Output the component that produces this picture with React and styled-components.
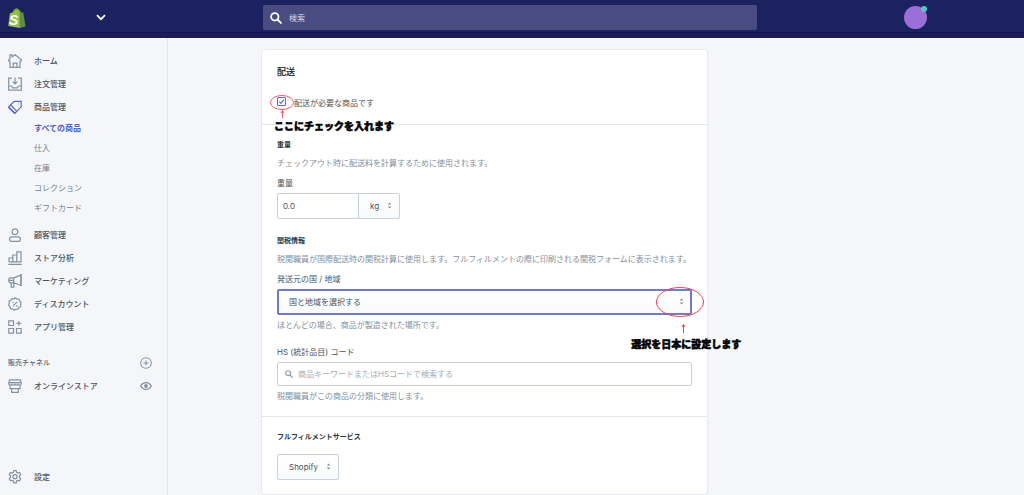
import React from 'react'
import styled, { createGlobalStyle, css } from 'styled-components'

const GlobalStyle = createGlobalStyle`
    * {
        box-sizing: border-box;
    }

    body {
        margin: 0;
        background: #f4f6fa;
        color: #4a545e;
        font-family: Inter, "Noto Sans CJK JP", sans-serif;
        font-size: 8px;
        line-height: 12px;
    }

    input, select, button {
        font: inherit;
        color: inherit;
    }
`;

const Page = styled.div`
    min-height: 100vh;
    display: flex;
    flex-direction: column;
`;

/* ---------- top bar ---------- */

const TopBar = styled.header`
    height: 38px;
    display: flex;
    align-items: flex-start;
    padding: 5px 97px 0 8px;
    background: #1c2260;
    border-bottom: 5px solid #181c5a;
    box-shadow: inset 0 -1px 0 #0f134c;
`;

const StoreMenu = styled.div`
    width: 255px;
    height: 25px;
    display: flex;
    align-items: center;
    gap: 70px;
`;

const MenuButton = styled.button`
    display: flex;
    padding: 0;
    border: 0;
    background: none;
    color: #fff;
`;

const SearchBox = styled.label`
    flex: 1;
    max-width: 494px;
    height: 25px;
    display: flex;
    align-items: center;
    gap: 7px;
    padding: 0 7px;
    border-radius: 2px;
    background: #494c80;
    color: #fff;
`;

const SearchInput = styled.input`
    flex: 1;
    min-width: 0;
    padding: 0;
    border: 0;
    outline: 0;
    background: none;

    &::placeholder {
        color: ${({ $tone }) => $tone || '#d6d8e8'};
        opacity: 1;
    }
`;

const Avatar = styled.button`
    position: relative;
    width: 23px;
    height: 23px;
    margin: 1px 0 0 auto;
    padding: 0;
    border: 0;
    border-radius: 50%;
    background: #9a6fd8;

    &::after {
        content: '';
        position: absolute;
        top: 0;
        right: 0;
        width: 6px;
        height: 6px;
        border-radius: 50%;
        background: #50c8be;
    }
`;

/* ---------- sidebar ---------- */

const Body = styled.div`
    flex: 1;
    display: flex;
`;

const Sidebar = styled.nav`
    width: 168px;
    flex-shrink: 0;
    display: flex;
    flex-direction: column;
    padding: 11px 15px 7px 8px;
    border-right: 1px solid #e3e6eb;
`;

const NavLink = styled.a`
    flex: 1;
    height: 23px;
    display: flex;
    align-items: center;
    gap: 12px;
    color: #4a5560;
    font-weight: 500;
    text-decoration: none;

    svg {
        color: ${({ $active }) => ($active ? '#5c6ac4' : '#84929f')};
    }
`;

const NavRow = styled.div`
    height: 23px;
    display: flex;
    align-items: center;
`;

const SubNav = styled.div`
    display: flex;
    flex-direction: column;
    padding: 0 0 5px 26px;
`;

const SubLink = styled.a`
    height: 20px;
    line-height: 20px;
    text-decoration: none;
    color: ${({ $active }) => ($active ? '#545dca' : '#75818c')};
    font-weight: ${({ $active }) => ($active ? 700 : 400)};
`;

const ChannelHead = styled.div`
    height: 22px;
    display: flex;
    align-items: center;
    justify-content: space-between;
    margin-top: 14px;
    color: #5b6772;
    font-size: 7px;
    font-weight: 500;
`;

const IconButton = styled.button`
    display: flex;
    padding: 0;
    border: 0;
    background: none;
    color: #84929f;
`;

const SettingsRow = styled(NavRow)`
    margin-top: auto;
`;

/* ---------- content ---------- */

const Main = styled.main`
    flex: 1;
    min-width: 0;
    padding: 12px 0 1px;
`;

const Columns = styled.div`
    max-width: 668px;
    margin: 0 auto;
    display: grid;
    grid-template-columns: minmax(0, 2fr) minmax(0, 1fr);
`;

const Card = styled.form`
    background: #fff;
    border-radius: 2px;
    box-shadow: 0 0 0 1px #e7eaef, 0 1px 2px #d5dae1;
`;

const Section = styled.section`
    display: flex;
    flex-direction: column;
    align-items: flex-start;
    padding: ${({ $pad }) => $pad} 15px;

    & + & {
        border-top: 1px solid #e3e7eb;
    }
`;

const Title = styled.h2`
    margin: 0 0 18px;
    font-size: 9px;
    line-height: 14px;
    font-weight: 700;
    color: #2c3640;
`;

const SubTitle = styled.h3`
    margin: ${({ $top }) => $top || 0} 0 0;
    font-size: 7px;
    line-height: 12px;
    font-weight: 700;
    color: #2c3640;
`;

const Help = styled.p`
    margin: ${({ $tight }) => ($tight ? '4px' : '6px')} 0 0;
    color: #84909b;
`;

const FieldLabel = styled.label`
    margin-top: ${({ $top }) => $top || '8px'};
    margin-bottom: 4px;
`;

const CheckLabel = styled.label`
    display: flex;
    align-items: flex-start;
    gap: 8px;
    height: 12px;
`;

const Marked = styled.span`
    position: relative;
    display: flex;
`;

const Checkbox = styled.input`
    appearance: none;
    width: 9px;
    height: 9px;
    margin: 0;
    border: 1px solid #5c6ac4;
    border-radius: 1px;
    background: #fff;

    &:not(:checked) + svg {
        display: none;
    }
`;

const Tick = styled.svg`
    position: absolute;
    inset: 0;
    pointer-events: none;
`;

const control = css`
    border: 1px solid #c9d2da;
    border-radius: 2px;
    outline: 0;
`;

const WeightRow = styled.div`
    display: flex;
`;

const WeightInput = styled.input`
    ${control}
    width: 82px;
    height: 26px;
    padding: 0 5px;
    border-radius: 2px 0 0 2px;
`;

const SelectWrap = styled.div`
    position: relative;
    width: ${({ $width }) => $width || '100%'};
    margin-top: ${({ $top }) => $top || 0};
    margin-left: ${({ $joined }) => ($joined ? '-1px' : 0)};
`;

const Select = styled.select`
    ${control}
    appearance: none;
    display: block;
    width: 100%;
    height: 26px;
    padding: 0 11px;
    background: linear-gradient(#fff, #f9fafb);

    ${({ $focused }) => $focused && css`
        border: 2px solid #6f79d0;
        padding: 0 10px;
    `}
`;

const Carets = styled.svg`
    position: absolute;
    top: 9px;
    right: 8px;
    color: #7c8995;
    pointer-events: none;
`;

const HsBox = styled.div`
    ${control}
    width: 100%;
    height: 24px;
    display: flex;
    align-items: center;
    gap: 5px;
    padding: 0 7px;
    color: #8f9ba6;
`;

/* ---------- notes drawn over the form ---------- */

const Ring = styled.svg`
    position: absolute;
    top: ${({ $top }) => $top};
    left: ${({ $left }) => $left};
    right: ${({ $right }) => $right};
    overflow: visible;
    pointer-events: none;
`;

const Note = styled.strong`
    position: absolute;
    z-index: 1;
    top: ${({ $top }) => $top};
    left: ${({ $left }) => $left};
    right: ${({ $right }) => $right};
    color: #000;
    font-size: 10px;
    line-height: 14px;
    font-weight: 900;
    font-family: "Noto Sans CJK JP", sans-serif;
    -webkit-text-stroke: 0.5px #000;
    white-space: nowrap;
`;

const Icon = ({ size = 14, children }) => (
    <svg width={size} height={size} viewBox="0 0 14 14" fill="none" stroke="currentColor" strokeWidth="1.2" aria-hidden="true">
        {children}
    </svg>
)

const icons = {
    home: (
        <>
            <path d="M2 13.3V7H.7V5.8L2 4.7V.8h2.2v2.1L7.2.8l6.1 5V7H12v6.3H9V9.2H5.2v4.1z" />
            <path d="M5.2 13.3H9" />
        </>
    ),
    orders: <path d="M4 1.2H.7v12h12.6v-12H10M7 .5v6.2M4.6 4.6 7 7l2.4-2.4M.7 9h3l1 1.8h4.6l1-1.8h3" />,
    products: (
        <>
            <path d="M6.2 1.3h7v5.5L7.1 13.1.8 6.8z" />
            <path d="M2.6 5 8.9 11.3M.8 6.8v1l5.7 5.6.6-.3" />
            <circle cx="10.8" cy="3.7" r=".5" fill="currentColor" stroke="none" />
        </>
    ),
    customers: (
        <>
            <circle cx="7" cy="3.7" r="2.9" />
            <path d="M3.6 8.8h6.8c1 0 2 1.2 2 2.4 0 1.4-1 2.2-2 2.2H3.6c-1 0-2-.8-2-2.2 0-1.2 1-2.4 2-2.4z" />
        </>
    ),
    analytics: <path d="M.3 13.4h13.4M1 10.9V7h3.8v3.9M4.8 10.9V4h4v6.9M8.8 10.9V.8H13v10.1zM1 10.9h8" />,
    marketing: (
        <>
            <path d="M5.8 3.9 13 .9v10.6L5.8 8.8H2.6A1.8 1.8 0 0 1 .8 7V5.7a1.8 1.8 0 0 1 1.8-1.8h3.2v9.3H3.2V8.8" />
            <path d="M.8 6.4h5M13 .3v11.8" />
        </>
    ),
    discounts: (
        <>
            <path d="m7 .8 1.7 1.1 2.1.1.8 1.9 1.5 1.5-.5 1.9.2 2.1-1.8 1.100-1.200 1.700-2 .100L6.300 13.200 4.800 12.100l-2.100-.4-.7-1.900L.7 8.200l.6-1.900-.2-2 1.800-1.100L4.100 1.700l2 .100z" />
            <path d="m4.900 9.100 4.200-4.200" />
            <circle cx="5" cy="5.300" r=".8" fill="currentColor" stroke="none" />
            <circle cx="9" cy="8.900" r=".8" fill="currentColor" stroke="none" />
        </>
    ),
    apps: <path d="M.8.9h4.700v4.600H.8zM.8 8.500h4.700v4.700H.8zM8.500 8.500h4.700v4.700H8.500zM10.800 1v4.800M8.400 3.400h4.800" />,
    store: (
        <>
            <path d="M1.600.8h10.800l.9 3.600c0 1-.8 1.800-1.600 1.800S10.100 5.400 10.100 4.400c0 1-.7 1.800-1.500 1.800S7 5.400 7 4.400c0 1-.8 1.800-1.600 1.800S3.900 5.400 3.900 4.400c0 1-.8 1.800-1.600 1.800S.7 5.400.7 4.400z" />
            <path d="M.8 3.600h12.400M2 6.300v3.300h10V6.300M3.700 9.600v3.700h6.600V9.600" />
        </>
    ),
    settings: (
        <>
            <path d="M5.800.7h2.400l.4 1.700 1.300.7 1.600-.6 1.200 2.100-1.200 1.200v1.700l1.200 1.200-1.200 2.100-1.600-.5-1.300.7-.4 1.900H5.800L5.400 11l-1.300-.7-1.600.5-1.200-2.100 1.200-1.200V5.800L1.300 4.600l1.200-2.100 1.600.6 1.300-.7z" />
            <circle cx="7" cy="6.800" r="2.100" />
        </>
    ),
    plus: (
        <>
            <circle cx="7" cy="7" r="6.200" />
            <path d="M7 4v6M4 7h6" />
        </>
    ),
    eye: (
        <>
            <path d="M.8 7C2.300 4.300 4.400 3 7 3s4.700 1.300 6.200 4C11.700 9.700 9.600 11 7 11S2.300 9.700.8 7z" strokeWidth="1.500" />
            <circle cx="7" cy="7" r="2.200" fill="currentColor" stroke="none" />
        </>
    ),
}

const Magnifier = ({ size }) => (
    <svg width={size} height={size} viewBox="0 0 12 12" fill="none" stroke="currentColor" strokeWidth="1.8" aria-hidden="true">
        <circle cx="4.800" cy="4.800" r="3.700" />
        <path d="m7.500 7.500 4 4" />
    </svg>
)

const LogoLetter = styled.text`
    font: italic 900 14px "Liberation Sans", sans-serif;
    fill: #fff;
`;

const Logo = () => (
    <svg width="18" height="20" viewBox="0 0 18 20" role="img" aria-label="Shopify">
        <path d="M1.900 5.300 4.600 4.500C5.200 2.300 6.900.6 8.700.5c.9-.1 1.500.4 1.800 1.100l1.700 1.300L12 20 .2 17.900z" fill="#95bf47" />
        <path d="m11.700 2.900 1.400 1.300 2.200.3L17.500 18.600 11.600 20z" fill="#5e8e3e" />
        <path d="M5.700 4.300C6.300 2.600 7.500 1.400 8.600 1.300c.8 0 1.200.8 1.300 2" fill="none" stroke="#5e8e3e" strokeWidth=".8" />
        <LogoLetter x="1" y="17">S</LogoLetter>
    </svg>
)

const UpDown = () => (
    <Carets width="5" height="7" viewBox="0 0 5 7" fill="currentColor" aria-hidden="true">
        <path d="M2.500.5 4.200 2.600H.8zM2.500 6.500l1.700-2.100H.8z" />
    </Carets>
)

const menuTop = [
    { icon: 'home', label: 'ホーム' },
    { icon: 'orders', label: '注文管理' },
    { icon: 'products', label: '商品管理', active: true },
]

const productMenu = ['すべての商品', '仕入', '在庫', 'コレクション', 'ギフトカード']

const menuBottom = [
    { icon: 'customers', label: '顧客管理' },
    { icon: 'analytics', label: 'ストア分析' },
    { icon: 'marketing', label: 'マーケティング' },
    { icon: 'discounts', label: 'ディスカウント' },
    { icon: 'apps', label: 'アプリ管理' },
]

const NavItem = ({ item }) => (
    <NavRow>
        <NavLink href="#" $active={item.active}>
            <Icon>{icons[item.icon]}</Icon>
            {item.label}
        </NavLink>
    </NavRow>
)

const SideMenu = () => (
    <Sidebar>
        {menuTop.map((item) => <NavItem key={item.label} item={item} />)}
        <SubNav>
            {productMenu.map((label, i) => (
                <SubLink key={label} href="#" $active={i === 0}>{label}</SubLink>
            ))}
        </SubNav>
        {menuBottom.map((item) => <NavItem key={item.label} item={item} />)}
        <ChannelHead>
            販売チャネル
            <IconButton type="button" aria-label="チャネルを追加">
                <Icon size={12}>{icons.plus}</Icon>
            </IconButton>
        </ChannelHead>
        <NavRow>
            <NavLink href="#">
                <Icon>{icons.store}</Icon>
                オンラインストア
            </NavLink>
            <IconButton type="button" aria-label="ストアを表示">
                <Icon size={12}>{icons.eye}</Icon>
            </IconButton>
        </NavRow>
        <SettingsRow>
            <NavLink href="#">
                <Icon>{icons.settings}</Icon>
                設定
            </NavLink>
        </SettingsRow>
    </Sidebar>
)

const ShippingCard = () => (
    <Card>
        <Section $pad="15px">
            <Title>配送</Title>
            <Marked>
                <CheckLabel>
                    <Marked>
                        <Checkbox type="checkbox" defaultChecked />
                        <Tick width="9" height="9" viewBox="0 0 9 9" fill="none" stroke="#5c6ac4" strokeWidth="1.2">
                            <path d="m2.200 4.600 1.700 1.700 3-3.600" />
                        </Tick>
                    </Marked>
                    配送が必要な商品です
                </CheckLabel>
                <Ring $top="-2px" $left="-7px" width="24" height="24" viewBox="0 0 24 24" fill="none" stroke="#f0596a">
                    <ellipse cx="12" cy="7.500" rx="11.500" ry="7" />
                    <path d="M12.500 23v-7M11 18l1.500-2.500L14 18" />
                </Ring>
                <Note $top="22px" $left="-3px">ここにチェックを入れます</Note>
            </Marked>
        </Section>
        <Section $pad="14px">
            <SubTitle>重量</SubTitle>
            <Help>チェックアウト時に配送料を計算するために使用されます。</Help>
            <FieldLabel htmlFor="weight">重量</FieldLabel>
            <WeightRow>
                <WeightInput id="weight" defaultValue="0.0" />
                <SelectWrap $width="42px" $joined>
                    <Select aria-label="単位"><option>kg</option></Select>
                    <UpDown />
                </SelectWrap>
            </WeightRow>
            <SubTitle $top="16px">関税情報</SubTitle>
            <Help>税関職員が国際配送時の関税計算に使用します。フルフィルメントの際に印刷される関税フォームに表示されます。</Help>
            <FieldLabel htmlFor="country">発送元の国 / 地域</FieldLabel>
            <SelectWrap>
                <Select id="country" $focused><option>国と地域を選択する</option></Select>
                <UpDown />
                <Ring $top="-2px" $right="-12px" width="48" height="47" viewBox="0 0 48 47" fill="none" stroke="#f0404e">
                    <ellipse cx="24" cy="15" rx="23.500" ry="14.500" />
                    <path d="M27.500 46v-8M26 40l1.500-2.500L29 40" />
                </Ring>
                <Note $top="48px" $right="-49px">選択を日本に設定します</Note>
            </SelectWrap>
            <Help $tight>ほとんどの場合、商品が製造された場所です。</Help>
            <FieldLabel htmlFor="hs-code" $top="15px">HS (統計品目) コード</FieldLabel>
            <HsBox>
                <Magnifier size={8} />
                <SearchInput id="hs-code" $tone="#a3adb7" placeholder="商品キーワードまたはHSコードで検索する" />
            </HsBox>
            <Help $tight>税関職員がこの商品の分類に使用します。</Help>
        </Section>
        <Section $pad="14px">
            <SubTitle as="label" htmlFor="service">フルフィルメントサービス</SubTitle>
            <SelectWrap $width="62px" $top="11px">
                <Select id="service"><option>Shopify</option></Select>
                <UpDown />
            </SelectWrap>
        </Section>
    </Card>
)

const App = () => {
    return (
        <Page>
            <GlobalStyle />
            <TopBar>
                <StoreMenu>
                    <Logo />
                    <MenuButton type="button" aria-label="ストアメニュー">
                        <svg width="10" height="7" viewBox="0 0 10 7" fill="none" stroke="currentColor" strokeWidth="1.7">
                            <path d="m1 1.200 4 4 4-4" />
                        </svg>
                    </MenuButton>
                </StoreMenu>
                <SearchBox>
                    <Magnifier size={12} />
                    <SearchInput placeholder="検索" aria-label="検索" />
                </SearchBox>
                <Avatar type="button" aria-label="アカウント" />
            </TopBar>
            <Body>
                <SideMenu />
                <Main>
                    <Columns>
                        <ShippingCard />
                    </Columns>
                </Main>
            </Body>
        </Page>
    )
}

export default App
